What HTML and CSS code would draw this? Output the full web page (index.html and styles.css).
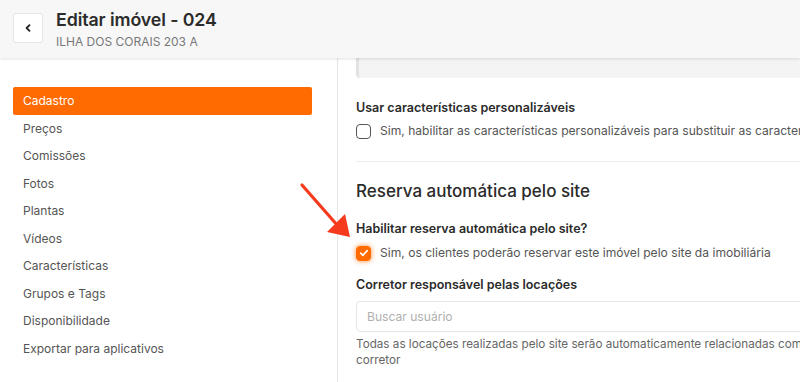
FILE: index.html
```html
<!DOCTYPE html>
<html lang="pt-BR">
<head>
  <meta charset="UTF-8" />
  <meta name="viewport" content="width=device-width, initial-scale=1.0"/>
  <title>Editar imóvel - 024</title>
  <link rel="stylesheet" href="styles.css">
</head>
<body>

  <header class="topbar">
    <button class="back-btn" type="button" aria-label="Voltar">
      <svg width="8" height="8" viewBox="0 0 8 8"><path d="M5.5 1.2 L2.6 4 L5.5 6.8" fill="none" stroke="#222" stroke-width="1.8" stroke-linecap="round" stroke-linejoin="round"/></svg>
    </button>
    <div class="titles">
      <h1>Editar imóvel - 024</h1>
      <p class="subtitle">ILHA DOS CORAIS 203 A</p>
    </div>
  </header>

  <div class="layout">
    <nav class="sidebar">
      <a class="menu-item active" href="#">Cadastro</a>
      <a class="menu-item" href="#">Preços</a>
      <a class="menu-item" href="#">Comissões</a>
      <a class="menu-item" href="#">Fotos</a>
      <a class="menu-item" href="#">Plantas</a>
      <a class="menu-item" href="#">Vídeos</a>
      <a class="menu-item" href="#">Características</a>
      <a class="menu-item" href="#">Grupos e Tags</a>
      <a class="menu-item" href="#">Disponibilidade</a>
      <a class="menu-item" href="#">Exportar para aplicativos</a>
    </nav>

    <section class="content">
      <div class="content-inner">
        <div class="note-box"></div>

        <div class="field first">
          <div class="field-label">Usar características personalizáveis</div>
          <label class="check">
            <span class="box"></span>
            Sim, habilitar as características personalizáveis para substituir as características padrão
          </label>
        </div>

        <hr class="divider">

        <h2>Reserva automática pelo site</h2>

        <div class="field after-title">
          <div class="field-label">Habilitar reserva automática pelo site?</div>
          <label class="check">
            <span class="box checked">
              <svg width="10" height="10" viewBox="0 0 10 10"><path d="M1.8 5.2 L4 7.3 L8.2 2.6" fill="none" stroke="#fff" stroke-width="1.7" stroke-linecap="round" stroke-linejoin="round"/></svg>
            </span>
            Sim, os clientes poderão reservar este imóvel pelo site da imobiliária
          </label>
        </div>

        <div class="field">
          <div class="field-label">Corretor responsável pelas locações</div>
          <input class="search" type="text" placeholder="Buscar usuário">
          <p class="help">Todas as locações realizadas pelo site serão automaticamente relacionadas com o corretor</p>
        </div>
      </div>
    </section>
  </div>

  <!-- annotation arrow -->
  <svg class="arrow" width="70" height="70" viewBox="0 0 70 70">
    <line x1="4" y1="4" x2="40" y2="45" stroke="#f53a1d" stroke-width="3.2" stroke-linecap="round"/>
    <polygon points="29,51 47,33 52,56" fill="#f53a1d"/>
  </svg>

</body>
</html>
```

FILE: styles.css
```css
body {
  margin: 0;
  font-family: Inter, "Noto Sans", sans-serif;
  color: #333;
  background: #fff;
  height: 382px;
  overflow: hidden;
}
.topbar {
  position: relative;
  z-index: 2;
  display: flex;
  align-items: center;
  gap: 13px;
  height: 58px;
  padding: 0 13px;
  background: #f7f7f7;
  box-shadow: 0 1px 3px rgba(0, 0, 0, 0.12);
}
.back-btn {
  width: 30px;
  height: 30px;
  padding: 0;
  display: flex;
  align-items: center;
  justify-content: center;
  background: #fff;
  border: 1px solid #e6e6e6;
  border-radius: 3px;
  margin-top: -2px;
}
.titles h1 {
  margin: 0;
  font-size: 17.8px;
  font-weight: 600;
  color: #2b2b2b;
  letter-spacing: -0.1px;
  line-height: 22px;
}
.subtitle {
  margin: 4px 0 0;
  font-size: 12px;
  color: #777;
  line-height: 14px;
}
.layout {
  display: grid;
  grid-template-columns: 338px 1fr;
  height: 324px;
}
.sidebar {
  border-right: 1px solid #e6e6e6;
  padding: 29px 25px 0 13px;
}
.menu-item {
  display: flex;
  align-items: center;
  height: 27.5px;
  padding-left: 10px;
  font-size: 12px;
  color: #555;
  text-decoration: none;
  border-radius: 2px;
}
.menu-item.active {
  background: #ff6b00;
  color: #fff;
}
.content {
  overflow: hidden;
  padding-left: 18px;
}
.content-inner {
  width: 470px;
}
.note-box {
  height: 20px;
  background: #f4f4f4;
  border-left: 3px solid #e2e2e2;
  border-radius: 0 0 0 4px;
}
.field {
  margin-top: 16px;
}
.field.first {
  margin-top: 22px;
}
.field.after-title {
  margin-top: 19px;
}
.field-label {
  font-size: 12.5px;
  font-weight: 600;
  color: #2b2b2b;
  line-height: 16px;
}
.check {
  display: flex;
  align-items: center;
  gap: 9px;
  margin-top: 7px;
  font-size: 12.1px;
  color: #555;
  white-space: nowrap;
  line-height: 16px;
}
.after-title .check {
  margin-top: 8px;
}
.box {
  flex: none;
  width: 13px;
  height: 13px;
  border: 1.5px solid #555;
  border-radius: 4px;
  display: flex;
  align-items: center;
  justify-content: center;
}
.box.checked {
  background: #ff6b00;
  border-color: #ff6b00;
  box-shadow: 0 0 4px 1px rgba(255, 107, 0, 0.55);
}
.divider {
  border: 0;
  border-top: 1px solid #ececec;
  margin: 22px 0 0;
}
h2 {
  margin: 18px 0 0;
  font-size: 17px;
  font-weight: 500;
  color: #2b2b2b;
  line-height: 22px;
}
.search {
  display: block;
  width: 100%;
  box-sizing: border-box;
  height: 31px;
  margin-top: 8px;
  padding: 0 10px;
  border: 1px solid #e6e6e6;
  border-radius: 4px;
  font-family: inherit;
  font-size: 12.1px;
  color: #333;
}
.search::placeholder {
  color: #b0b0b0;
}
.help {
  margin: 4px 0 0;
  font-size: 11.7px;
  line-height: 16px;
  color: #666;
}
.arrow {
  position: absolute;
  left: 298px;
  top: 181px;
}
```
